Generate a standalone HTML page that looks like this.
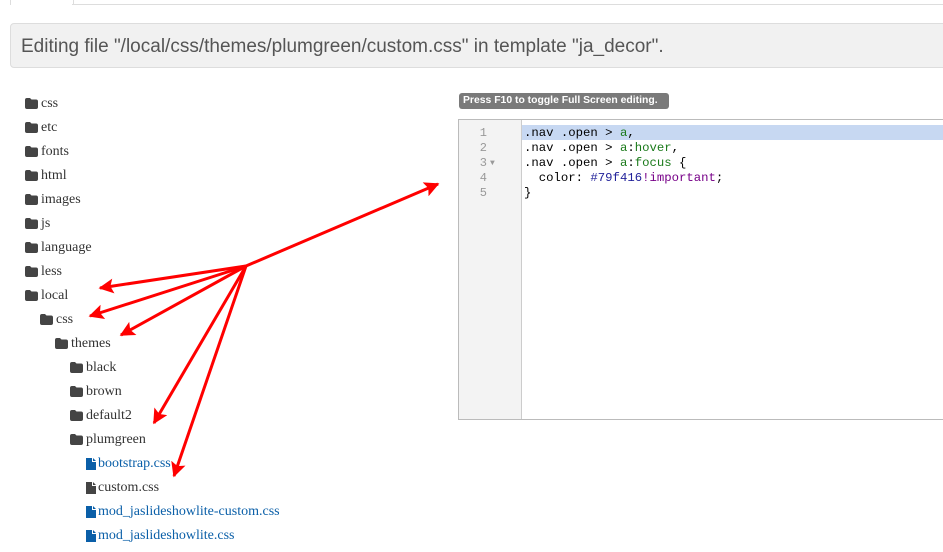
<!DOCTYPE html>
<html><head><meta charset="utf-8"><style>
body{margin:0;width:943px;height:552px;overflow:hidden;background:#fff;position:relative;font-family:"Liberation Serif",serif}
.tab{position:absolute;left:10px;top:-2px;width:62px;height:6px;border:1px solid #ddd;border-bottom:none;background:#fff}
.tabline{position:absolute;left:72px;right:0;top:4px;border-top:1px solid #ddd}
.hdr{position:absolute;left:10px;top:23px;width:945px;height:45px;background:#f1f1f1;border:1px solid #ddd;border-radius:4px;font-family:"Liberation Sans",sans-serif;font-size:19px;color:#555;line-height:46px;padding-left:10px;box-sizing:border-box}
.it{position:absolute;font-size:14px;color:#333;height:20px;line-height:20px}
.it svg{position:absolute;left:0;top:4px}
.it span{position:absolute;left:16px;white-space:nowrap}
.f span{left:12px}
.b span{color:#0a5fa8}
.press{position:absolute;left:459px;top:93px;width:210px;height:16px;background:#7a7a7a;border-radius:3px;color:#fff;font-family:"Liberation Sans",sans-serif;font-weight:bold;font-size:10.4px;line-height:16px;padding-left:4px;box-sizing:border-box;white-space:nowrap}
.ed{position:absolute;left:458px;top:119px;width:500px;height:301px;border:1px solid #bbb;box-sizing:border-box;background:#fff}
.gut{position:absolute;left:0;top:0;width:62px;height:100%;background:#f3f3f3;border-right:1px solid #ccc}
.ln{position:absolute;left:0;width:28px;text-align:right;font-family:"Liberation Mono",monospace;font-size:12px;color:#999;line-height:15px}
.hl{position:absolute;left:63px;right:0;top:5px;height:15px;background:#c7d8f2}
.code{position:absolute;left:65px;top:6px;font-family:"Liberation Mono",monospace;font-size:12.3px;line-height:15px;color:#000;white-space:pre}
.g{color:#1a7a1a}.p{color:#770088}.n{color:#22229a}
</style></head><body>
<div class="tab"></div><div class="tabline"></div>
<div class="hdr">Editing file "/local/css/themes/plumgreen/custom.css" in template "ja_decor".</div>

<div class="it" style="left:25px;top:94px"><svg width="13" height="11"><path d="M0 2Q0 0 2 0H5L6.5 1.5H11Q13 1.5 13 3.5V9Q13 11 11 11H2Q0 11 0 9Z" fill="#444"/></svg><span>css</span></div>
<div class="it" style="left:25px;top:118px"><svg width="13" height="11"><path d="M0 2Q0 0 2 0H5L6.5 1.5H11Q13 1.5 13 3.5V9Q13 11 11 11H2Q0 11 0 9Z" fill="#444"/></svg><span>etc</span></div>
<div class="it" style="left:25px;top:142px"><svg width="13" height="11"><path d="M0 2Q0 0 2 0H5L6.5 1.5H11Q13 1.5 13 3.5V9Q13 11 11 11H2Q0 11 0 9Z" fill="#444"/></svg><span>fonts</span></div>
<div class="it" style="left:25px;top:166px"><svg width="13" height="11"><path d="M0 2Q0 0 2 0H5L6.5 1.5H11Q13 1.5 13 3.5V9Q13 11 11 11H2Q0 11 0 9Z" fill="#444"/></svg><span>html</span></div>
<div class="it" style="left:25px;top:190px"><svg width="13" height="11"><path d="M0 2Q0 0 2 0H5L6.5 1.5H11Q13 1.5 13 3.5V9Q13 11 11 11H2Q0 11 0 9Z" fill="#444"/></svg><span>images</span></div>
<div class="it" style="left:25px;top:214px"><svg width="13" height="11"><path d="M0 2Q0 0 2 0H5L6.5 1.5H11Q13 1.5 13 3.5V9Q13 11 11 11H2Q0 11 0 9Z" fill="#444"/></svg><span>js</span></div>
<div class="it" style="left:25px;top:238px"><svg width="13" height="11"><path d="M0 2Q0 0 2 0H5L6.5 1.5H11Q13 1.5 13 3.5V9Q13 11 11 11H2Q0 11 0 9Z" fill="#444"/></svg><span>language</span></div>
<div class="it" style="left:25px;top:262px"><svg width="13" height="11"><path d="M0 2Q0 0 2 0H5L6.5 1.5H11Q13 1.5 13 3.5V9Q13 11 11 11H2Q0 11 0 9Z" fill="#444"/></svg><span>less</span></div>
<div class="it" style="left:25px;top:286px"><svg width="13" height="11"><path d="M0 2Q0 0 2 0H5L6.5 1.5H11Q13 1.5 13 3.5V9Q13 11 11 11H2Q0 11 0 9Z" fill="#444"/></svg><span>local</span></div>
<div class="it" style="left:40px;top:310px"><svg width="13" height="11"><path d="M0 2Q0 0 2 0H5L6.5 1.5H11Q13 1.5 13 3.5V9Q13 11 11 11H2Q0 11 0 9Z" fill="#444"/></svg><span>css</span></div>
<div class="it" style="left:55px;top:334px"><svg width="13" height="11"><path d="M0 2Q0 0 2 0H5L6.5 1.5H11Q13 1.5 13 3.5V9Q13 11 11 11H2Q0 11 0 9Z" fill="#444"/></svg><span>themes</span></div>
<div class="it" style="left:70px;top:358px"><svg width="13" height="11"><path d="M0 2Q0 0 2 0H5L6.5 1.5H11Q13 1.5 13 3.5V9Q13 11 11 11H2Q0 11 0 9Z" fill="#444"/></svg><span>black</span></div>
<div class="it" style="left:70px;top:382px"><svg width="13" height="11"><path d="M0 2Q0 0 2 0H5L6.5 1.5H11Q13 1.5 13 3.5V9Q13 11 11 11H2Q0 11 0 9Z" fill="#444"/></svg><span>brown</span></div>
<div class="it" style="left:70px;top:406px"><svg width="13" height="11"><path d="M0 2Q0 0 2 0H5L6.5 1.5H11Q13 1.5 13 3.5V9Q13 11 11 11H2Q0 11 0 9Z" fill="#444"/></svg><span>default2</span></div>
<div class="it" style="left:70px;top:430px"><svg width="13" height="11"><path d="M0 2Q0 0 2 0H5L6.5 1.5H11Q13 1.5 13 3.5V9Q13 11 11 11H2Q0 11 0 9Z" fill="#444"/></svg><span>plumgreen</span></div>
<div class="it f b" style="left:86px;top:454px"><svg width="10" height="12"><path d="M0 0H6V4H10V12H0Z M7 0L10 3H7Z" fill="#0a5fa8"/></svg><span>bootstrap.css</span></div>
<div class="it f" style="left:86px;top:478px"><svg width="10" height="12"><path d="M0 0H6V4H10V12H0Z M7 0L10 3H7Z" fill="#444"/></svg><span>custom.css</span></div>
<div class="it f b" style="left:86px;top:502px"><svg width="10" height="12"><path d="M0 0H6V4H10V12H0Z M7 0L10 3H7Z" fill="#0a5fa8"/></svg><span>mod_jaslideshowlite-custom.css</span></div>
<div class="it f b" style="left:86px;top:526px"><svg width="10" height="12"><path d="M0 0H6V4H10V12H0Z M7 0L10 3H7Z" fill="#0a5fa8"/></svg><span>mod_jaslideshowlite.css</span></div>

<div class="press">Press F10 to toggle Full Screen editing.</div>
<div class="ed">
<div class="gut">
<div class="ln" style="top:6px">1</div><div class="ln" style="top:21px">2</div><div class="ln" style="top:36px">3 <span style="font-size:8px;position:absolute;left:31px">▼</span></div><div class="ln" style="top:51px">4</div><div class="ln" style="top:66px">5</div>
</div>
<div class="hl"></div>
<div class="code">.nav .open &gt; <span class="g">a</span>,
.nav .open &gt; <span class="g">a</span>:<span class="g">hover</span>,
.nav .open &gt; <span class="g">a</span>:<span class="g">focus</span> {
  color: <span class="n">#79f416</span><span class="p">!important</span>;
}</div>
</div>

<svg style="position:absolute;left:0;top:0" width="943" height="552">
<defs><marker id="ah" viewBox="0 0 10 10" refX="9" refY="5" markerWidth="7" markerHeight="5" orient="auto" markerUnits="strokeWidth"><path d="M0 0L10 5L0 10L2 5Z" fill="#f00"/></marker></defs>
<g stroke="#f00" stroke-width="3" fill="none" marker-end="url(#ah)">
<line x1="246" y1="266" x2="438" y2="184"/>
<line x1="246" y1="266" x2="100" y2="288"/>
<line x1="246" y1="266" x2="90" y2="316"/>
<line x1="246" y1="266" x2="121" y2="335"/>
<line x1="246" y1="266" x2="154" y2="423"/>
<line x1="246" y1="266" x2="174" y2="476"/>
</g></svg>
</body></html>
